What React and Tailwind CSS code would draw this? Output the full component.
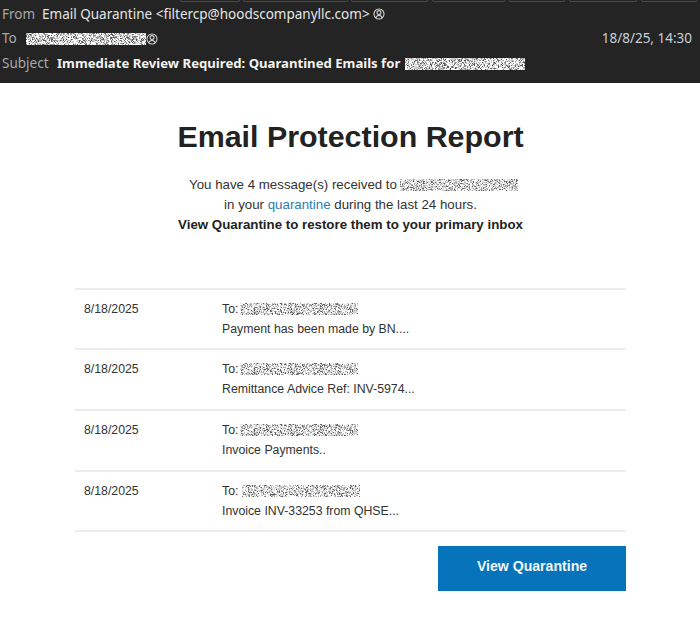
import React from "react";

function Noise({ w, h, seed, dark = false, className = "" }) {
  const cells = [];
  let s = seed * 9301 + 49297;
  const rnd = () => {
    s = (s * 1103515 + 12345) % 2147483648;
    return s / 2147483648;
  };
  for (let y = 0; y < h; y += 1) {
    for (let x = 0; x < w; x += 1) {
      const r = rnd();
      const fill = dark
        ? r < 0.42 ? "#ffffff" : r < 0.72 ? "#c8c8c8" : r < 0.9 ? "#8e8e8e" : "#5a5a5a"
        : r < 0.38 ? "#ffffff" : r < 0.66 ? "#d8d8d8" : r < 0.88 ? "#a8a8a8" : "#626262";
      cells.push(<rect key={`${x}-${y}`} x={x} y={y} width="1" height="1" fill={fill} />);
    }
  }
  return (
    <svg width={w} height={h} viewBox={`0 0 ${w} ${h}`} shapeRendering="crispEdges" className={`inline-block shrink-0 ${className}`}>
      {cells}
    </svg>
  );
}

function PersonIcon() {
  return (
    <svg width="12" height="12" viewBox="0 0 11 11" fill="none" stroke="#d4d4d4" strokeWidth="1" className="shrink-0">
      <circle cx="5.5" cy="5.5" r="4.6" />
      <circle cx="5.5" cy="4.2" r="1.8" />
      <path d="M2.5 9c.6-1.6 1.6-2.2 3-2.2s2.4.6 3 2.2" />
    </svg>
  );
}

function Row({ seed, subject, pb = "pb-[10px]", gap = "ml-[2px]" }) {
  return (
    <div className={`flex border-b-2 border-[#ececec] pl-[9px] pt-[9px] ${pb} text-[12.3px] leading-[20px] text-[#333333]`}>
      <div className="w-[138px] shrink-0">8/18/2025</div>
      <div>
        <div className="flex items-center">
          <span>To:</span>
          <Noise w={118} h={12} seed={seed} className={gap} />
        </div>
        <div>{subject}</div>
      </div>
    </div>
  );
}

export default function App() {
  return (
    <div className="h-[619px] w-[700px] overflow-hidden bg-white font-['Liberation_Sans',Arial,sans-serif]">
      <header className="h-[83px] bg-[#242424] font-['Noto_Sans','Open_Sans',sans-serif] text-[13.5px]">
        <div className="flex h-[2px] items-end pl-[180px]">
          <div className="h-[2px] w-[60px] rounded-b border-x border-b border-[#4a4a4a]" />
          <div className="ml-[3px] h-[2px] w-[105px] rounded-b border-x border-b border-[#4a4a4a]" />
          <div className="ml-[3px] h-[2px] w-[77px] rounded-b border-x border-b border-[#4a4a4a]" />
          <div className="ml-[4px] h-[2px] w-[73px] rounded-b border-x border-b border-[#4a4a4a]" />
          <div className="ml-[4px] h-[2px] w-[56px] rounded-b border-x border-b border-[#4a4a4a]" />
          <div className="ml-[4px] h-[2px] w-[68px] rounded-b border-x border-b border-[#4a4a4a]" />
          <div className="ml-[4px] h-[2px] w-[56px] rounded-b border-x border-b border-[#4a4a4a]" />
        </div>
        <div className="flex h-[23px] items-center pl-[2px] pt-[1px]">
          <span className="w-[40px] text-[#a8a8a8]">From</span>
          <span className="text-[#e4e4e4]">Email Quarantine &lt;filtercp@hoodscompanyllc.com&gt;</span>
          <span className="ml-[3px]"><PersonIcon /></span>
        </div>
        <div className="flex h-[27px] items-center pl-[2px]">
          <span className="w-[24px] text-[#a8a8a8]">To</span>
          <Noise w={120} h={12} seed={7} dark />
          <span className="ml-[0px]"><PersonIcon /></span>
          <span className="ml-auto pr-[8px] text-[#c6d0dc]">18/8/25, 14:30</span>
        </div>
        <div className="flex h-[23px] items-center pl-[2px]">
          <span className="w-[55px] text-[#a8a8a8]">Subject</span>
          <span className="text-[13.15px] font-bold text-[#f2f2f2]">Immediate Review Required: Quarantined Emails for</span>
          <Noise w={120} h={12} seed={13} dark className="ml-[5px]" />
        </div>
      </header>

      <main className="mx-[75px] w-[551px]">
        <h1 className="mt-[35px] text-center text-[30.4px] font-bold leading-[36px] text-[#222222]">Email Protection Report</h1>
        <div className="mt-[21px] text-center text-[13.3px] leading-[20px] text-[#333333]">
          <div className="flex items-center justify-center pl-[6px]">
            <span>You have 4 message(s) received to</span>
            <Noise w={118} h={12} seed={21} className="ml-[3px]" />
          </div>
          <div>in your <span className="text-[#2b7cb5]">quarantine</span> during the last 24 hours.</div>
          <div className="font-bold text-[#222222]">View Quarantine to restore them to your primary inbox</div>
        </div>

        <div className="mt-[53px] border-t-2 border-[#ececec]">
          <Row seed={31} subject="Payment has been made by BN...." pb="pb-[9px]" />
          <Row seed={31} subject="Remittance Advice Ref: INV-5974..." />
          <Row seed={31} subject="Invoice Payments.." />
          <Row seed={37} subject="Invoice INV-33253 from QHSE..." pb="pb-[9px]" gap="ml-[4px]" />
        </div>

        <div className="mt-[14px] flex justify-end">
          <button className="h-[45px] w-[188px] bg-[#0773bb] pb-[3px] text-[14.1px] font-bold text-[#f0f6fa]">View Quarantine</button>
        </div>
      </main>
    </div>
  );
}
